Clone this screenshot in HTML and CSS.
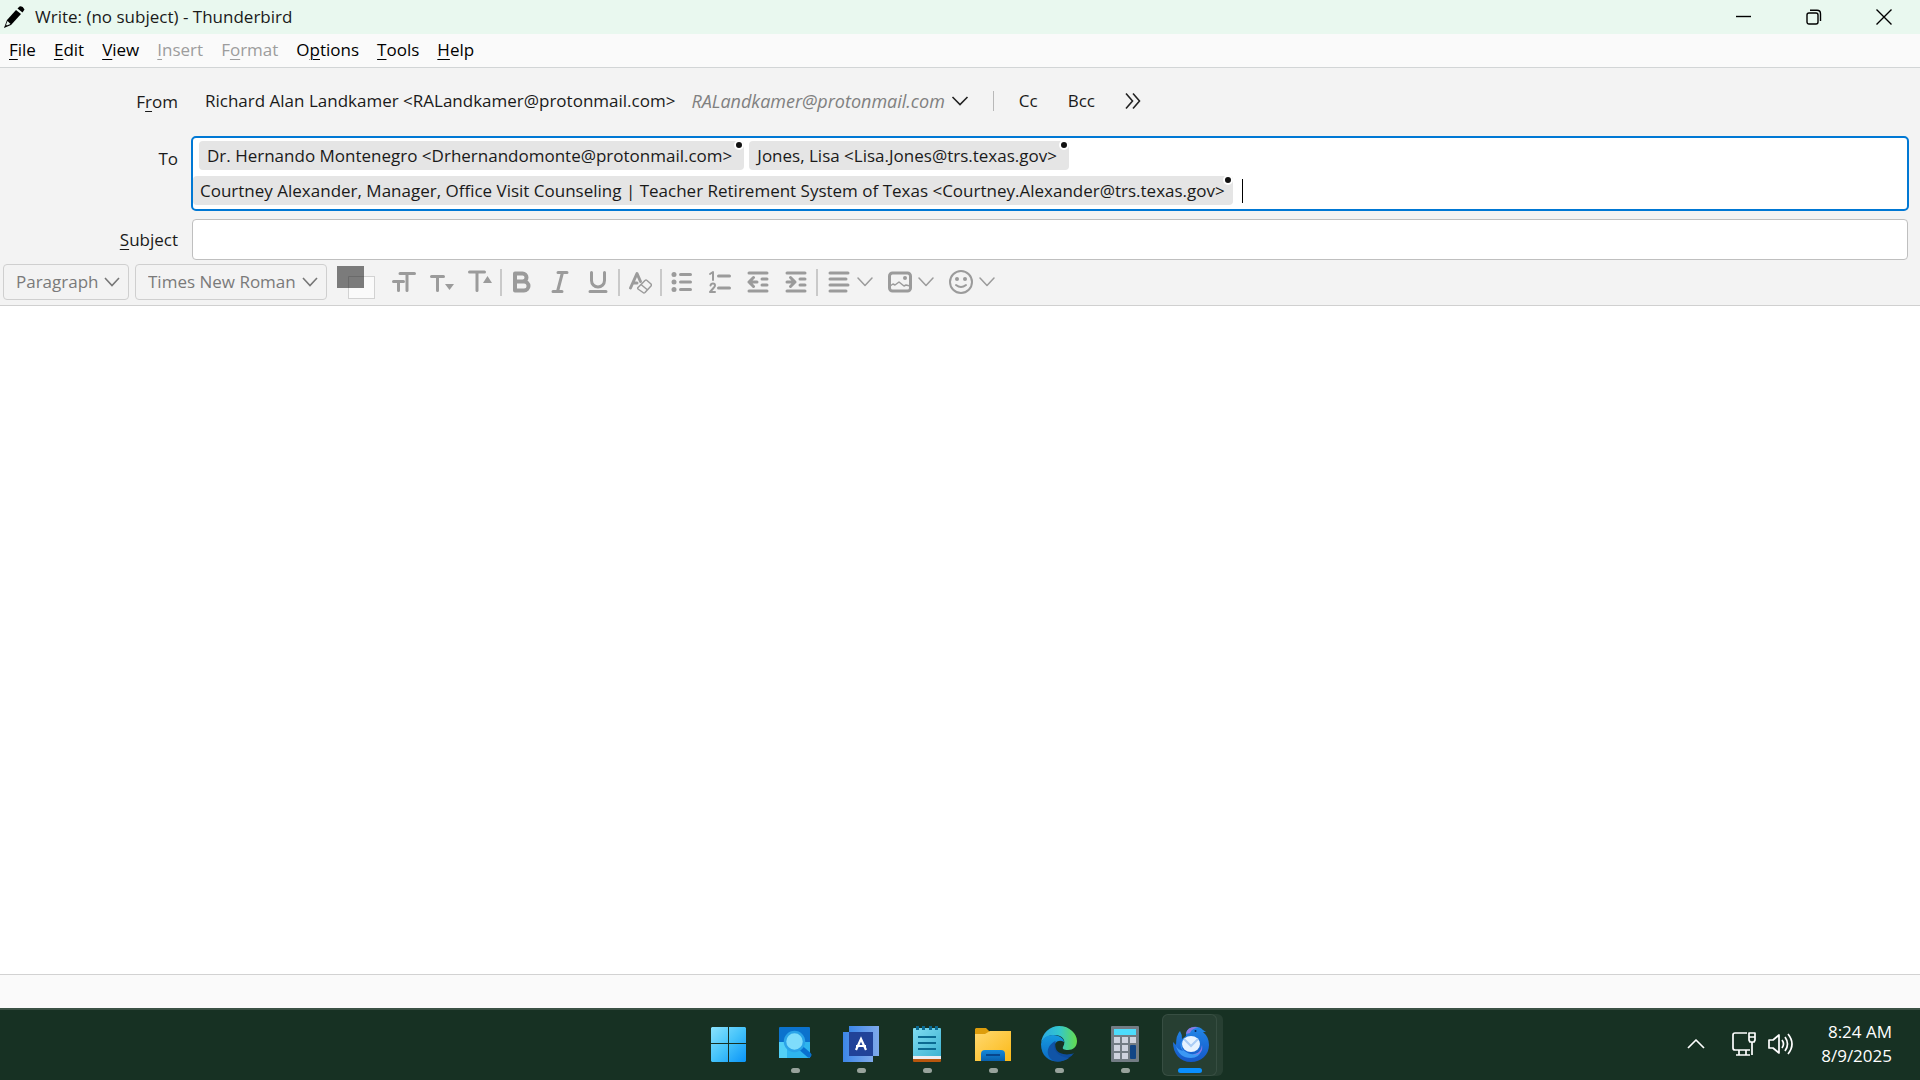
FILE: index.html
```html
<!DOCTYPE html>
<html lang="en">
<head>
<meta charset="utf-8">
<title>Write: (no subject) - Thunderbird</title>
<link rel="stylesheet" href="styles.css">
</head>
<body>
<header class="titlebar">
  <svg class="pencil" width="24" height="28" viewBox="0 0 24 28"><path d="M3 25l3-8L15 7l5 4L10 22z" fill="#000"/><path d="M16.500 5.500l2-2q3-1 5 3L21.500 9.500z" fill="#000"/><path d="M4.500 23l2-5 3 3z" fill="#e9f8ef"/><path d="M3.500 24.500l1.500-3 1 1z"/></svg>
  <h1>Write: (no subject) - Thunderbird</h1>
  <button class="win" aria-label="Minimize"><svg width="16" height="16" viewBox="0 0 16 16"><path d="M0 7.500h15"/></svg></button>
  <button class="win" aria-label="Restore"><svg width="16" height="16" viewBox="0 0 16 16"><rect x="1" y="4" width="11" height="11" rx="2"/><path d="M4 1.200h7q3.500 0 3.500 3.500V12"/></svg></button>
  <button class="win" aria-label="Close"><svg width="16" height="16" viewBox="0 0 16 16"><path d="M.5.5l15 15M15.500.5l-15 15"/></svg></button>
</header>

<nav class="menubar">
  <button><u>F</u>ile</button>
  <button><u>E</u>dit</button>
  <button><u>V</u>iew</button>
  <button disabled><u>I</u>nsert</button>
  <button disabled>F<u>o</u>rmat</button>
  <button>O<u>p</u>tions</button>
  <button><u>T</u>ools</button>
  <button><u>H</u>elp</button>
</nav>

<main class="compose">
  <section class="headers">
    <label class="name name-from" for="from">F<u>r</u>om</label>
    <div class="from-row">
      <button class="identity" id="from"><span>Richard Alan Landkamer &lt;RALandkamer@protonmail.com&gt;</span><i>RALandkamer@protonmail.com</i><svg class="chev" width="18" height="10" viewBox="0 0 18 10"><path d="M1.500 1l7.500 7.500L16.500 1"/></svg></button>
      <span class="divider"></span>
      <button class="extra">Cc</button>
      <button class="extra">Bcc</button>
      <button class="extra" aria-label="Other fields"><svg class="chev" width="16" height="18" viewBox="0 0 16 18"><path d="M1 1.500L7.500 9 1 16.500M8 1.500L14.500 9 8 16.500"/></svg></button>
    </div>

    <label class="name name-to" for="to">To</label>
    <div class="recipients">
      <div class="line inset">
        <span class="pill">Dr. Hernando Montenegro &lt;Drhernandomonte@protonmail.com&gt;<b class="dot"></b></span>
        <span class="pill">Jones, Lisa &lt;Lisa.Jones@trs.texas.gov&gt;<b class="dot"></b></span>
      </div>
      <div class="line">
        <span class="pill">Courtney Alexander, Manager, Office Visit Counseling | Teacher Retirement System of Texas &lt;Courtney.Alexander@trs.texas.gov&gt;<b class="dot"></b></span>
        <span class="caret"></span>
        <input class="to-input" id="to" type="text">
      </div>
    </div>

    <label class="name" for="subject"><u>S</u>ubject</label>
    <input class="subject" id="subject" type="text">
  </section>

  <div class="toolbar">
    <span class="combo combo-style"><select disabled aria-label="Paragraph format"><option>Paragraph</option></select><svg width="16" height="10" viewBox="0 0 16 10"><path d="M1 1l7 7.500L15 1"/></svg></span>
    <span class="combo combo-font"><select disabled aria-label="Font"><option>Times New Roman</option></select><svg width="16" height="10" viewBox="0 0 16 10"><path d="M1 1l7 7.500L15 1"/></svg></span>
    <button class="swatch" disabled aria-label="Text colour"><svg width="40" height="34" viewBox="0 0 40 34"><rect x="11.500" y="10.500" width="26" height="22" fill="#fafafa" stroke="#d2d2d2"/><rect width="27" height="22" fill="#7b7b7b"/><path d="M11.500 22V10.500H27" fill="none" stroke="#6a6a6a"/></svg></button>
    <button class="tool" disabled aria-label="Font size"><svg width="24" height="24" viewBox="0 0 24 24"><path d="M8 3.500h14.500M15 3.500v17M1.500 11.500h10M6.500 11.500v9" class="thick"/></svg></button>
    <button class="tool" disabled aria-label="Smaller"><svg width="24" height="24" viewBox="0 0 24 24"><path d="M1.500 6.500h12M7.500 6.500v14" class="thick"/><path d="M15 14h9l-4.500 6z" class="solid"/></svg></button>
    <button class="tool" disabled aria-label="Larger"><svg width="24" height="24" viewBox="0 0 24 24"><path d="M1.500 2h15M9 2v18.500" class="thick"/><path d="M15 13h9l-4.500-7z" class="solid"/></svg></button>
    <span class="sep"></span>
    <button class="tool" disabled aria-label="Bold"><svg width="24" height="24" viewBox="0 0 24 24"><path d="M5 3.500h7.500a4 4 0 0 1 0 8H5zM5 11.500h9a4.300 4.300 0 0 1 0 9H5z" class="heavy"/></svg></button>
    <button class="tool" disabled aria-label="Italic"><svg width="24" height="24" viewBox="0 0 24 24"><path d="M10 2.500h9M5 21.500h9M14.500 2.500l-5 19" class="thick"/></svg></button>
    <button class="tool" disabled aria-label="Underline"><svg width="24" height="24" viewBox="0 0 24 24"><path d="M5.500 2.500v8a6.500 6.500 0 0 0 13 0v-8M4 21.500h16" class="thick"/></svg></button>
    <span class="sep"></span>
    <button class="tool" disabled aria-label="Remove formatting"><svg width="24" height="24" viewBox="0 0 24 24"><path d="M2.500 18L9 3.500l3.500 8M5 13h4" class="thick"/><path d="M10 17.500l7-7q1-.8 2 0l4 3.500q.8 1 0 2l-6 6.500q-1 .8-2 0L10 19q-.6-.8 0-1.500zM13 14.500l6 5" class="thin"/></svg></button>
    <span class="sep"></span>
    <button class="tool" disabled aria-label="Bulleted list"><svg width="24" height="24" viewBox="0 0 24 24"><circle cx="4" cy="4.500" r="2.500" class="solid"/><circle cx="4" cy="12" r="2.500" class="solid"/><circle cx="4" cy="19.500" r="2.500" class="solid"/><path d="M10.500 4.500h10M10.500 12h10M10.500 19.500h10" class="thick"/></svg></button>
    <button class="tool" disabled aria-label="Numbered list"><svg width="24" height="24" viewBox="0 0 24 24"><path d="M2 4l3-2v8M2.500 15.500q.5-2 2.500-2 2 0 2 2 0 1-1.500 2.500L2 22h5" class="mid"/><path d="M10.500 6h11M10.500 18h11" class="thick"/></svg></button>
    <button class="tool" disabled aria-label="Outdent"><svg width="24" height="24" viewBox="0 0 24 24"><path d="M3 3h18M3 21h18M16 9h5M16 15h5M3 12h8M7.500 7.500L3 12l4.500 4.500" class="thick"/></svg></button>
    <button class="tool" disabled aria-label="Indent"><svg width="24" height="24" viewBox="0 0 24 24"><path d="M3 3h18M3 21h18M16 9h5M16 15h5M3 12h8M6.500 7.500L11 12l-4.500 4.500" class="thick"/></svg></button>
    <span class="sep"></span>
    <button class="tool wide" disabled aria-label="Align"><svg width="24" height="24" viewBox="0 0 24 24"><path d="M3 3h18M3 9h16M3 15h18M3 21h16" class="thick"/></svg><svg width="16" height="10" viewBox="0 0 16 10"><path d="M1 1l7 7.500L15 1" class="thin"/></svg></button>
    <button class="tool wide" disabled aria-label="Insert image"><svg width="24" height="24" viewBox="0 0 24 24"><rect x="1.500" y="3" width="21" height="18" rx="3" class="thick"/><circle cx="17" cy="8" r="2" class="solid"/><path d="M2 16l3-2 2 1 4-3 5 4 2-1 4 1" class="thin"/></svg><svg width="16" height="10" viewBox="0 0 16 10"><path d="M1 1l7 7.500L15 1" class="thin"/></svg></button>
    <button class="tool wide" disabled aria-label="Insert emoji"><svg width="24" height="24" viewBox="0 0 24 24"><circle cx="12" cy="12" r="11" class="mid"/><circle cx="8" cy="9" r="2" class="solid"/><circle cx="16" cy="9" r="2" class="solid"/><path d="M7 15q5 4 10 0" class="mid"/></svg><svg width="16" height="10" viewBox="0 0 16 10"><path d="M1 1l7 7.500L15 1" class="thin"/></svg></button>
  </div>

  <textarea class="editor" aria-label="Message body"></textarea>
  <div class="statusbar"></div>
</main>

<footer class="taskbar">
  <span></span>
  <div class="apps">
    <button class="app" aria-label="Start"><svg width="36" height="36" viewBox="0 0 36 36"><defs><linearGradient id="win" x2="1" y2="1" gradientUnits="objectBoundingBox"><stop stop-color="#8be3fd"/><stop offset=".5" stop-color="#45c3fa"/><stop offset="1" stop-color="#0a94f8"/></linearGradient></defs><path d="M1 1h16v16H0V2zM18 1h16l1 1v15H18zM0 18h17v18H1l-1-1zM18 18h17v17l-1 1H18z" fill="url(#win)"/></svg></button>
    <button class="app open" aria-label="Search"><svg width="36" height="36" viewBox="0 0 36 36"><rect x="2" y="1" width="31" height="31" rx="1" fill="#0b72cd"/><path d="M2 16h31v16H2z" fill="#2eb5ee"/><path d="M2 16h8v16H2z" fill="#52d0f6"/><path d="M24 22l8 7" stroke="#0870cf" stroke-width="5" stroke-linecap="round"/><circle cx="17.500" cy="15.500" r="9.500" fill="#7fdcfb" stroke="#2aa3e8" stroke-width="2.500"/></svg></button>
    <button class="app open" aria-label="Scanner"><svg width="36" height="36" viewBox="0 0 36 36"><defs><linearGradient id="bk"><stop stop-color="#3c86e8"/><stop offset="1" stop-color="#7fa9ea"/></linearGradient></defs><path d="M6 0h30v30H6z" fill="url(#bk)"/><path d="M0 6h30v30H0z" fill="url(#bk)"/><path d="M6 6h24v24H6z" fill="#214298"/><path d="M13 24l5-11 5 11M13 20h10" fill="none" stroke="#fff" stroke-width="2.200"/></svg></button>
    <button class="app open" aria-label="Notepad"><svg width="36" height="36" viewBox="0 0 36 36"><defs><linearGradient id="np" x2="1" y2="1"><stop stop-color="#80dcf1"/><stop offset="1" stop-color="#3eb3d2"/></linearGradient></defs><rect x="4" y="26" width="28" height="10" rx="1" fill="#b9560d"/><path d="M4 28h28v5H4z" fill="#ececf2"/><path d="M4 3q0-1 1-1h26q1 0 1 1v27H4z" fill="url(#np)"/><path d="M9 11h18M9 17h18M9 23h18" stroke="#0b6a92" stroke-width="2"/><path d="M8.500 0v4M14.500 0v4M21.500 0v4M27.500 0v4" stroke="#0b6a92" stroke-width="3"/></svg></button>
    <button class="app open" aria-label="File Explorer"><svg width="36" height="36" viewBox="0 0 36 36"><defs><linearGradient id="fo" x2="1" y2="1"><stop stop-color="#ffd970"/><stop offset="1" stop-color="#fbb917"/></linearGradient><linearGradient id="fb" x2="0" y2="1"><stop stop-color="#1489db"/><stop offset="1" stop-color="#0960ac"/></linearGradient></defs><path d="M0 3l1-1h10l4 4v6H0z" fill="#dd9d0c"/><path d="M0 8h10l5-3h21v30H0z" fill="url(#fo)"/><path d="M6 35v-7q0-4 4-4h16q4 0 4 4v7z" fill="url(#fb)"/><path d="M11 29h14" stroke="#07468c" stroke-width="2"/></svg></button>
    <button class="app open" aria-label="Edge"><svg width="36" height="36" viewBox="0 0 36 36"><defs><linearGradient id="e1"><stop stop-color="#2aa8e4"/><stop offset=".5" stop-color="#33c6ce"/><stop offset="1" stop-color="#65dc4c"/></linearGradient><linearGradient id="e2" x2="0" y2="1"><stop stop-color="#169adf"/><stop offset="1" stop-color="#0b68c4"/></linearGradient></defs><path d="M0 17C1 7 9 0 18 0c11 0 18 8 18 15 0 6-4 9-9 9-4 0-6-1-5-3 4-7-1-12-8-12C7 9 2 12 0 17z" fill="url(#e1)"/><path d="M0 18C1 12 6 9 12 9c7 0 11 4 11 7-6-4-12 2-9 9 2 5 8 8 14 6-8 8-28 6-28-13z" fill="url(#e2)"/><path d="M15 15c-6 4-5 14 3 17 5 2 11 1 15-5-7 3-16 1-18-4-1-3-1-6 0-8z" fill="#0d4c9c"/><path d="M13 35c-8-4-9-14 1-20-3 8 2 16 14 17-4 3-9 4-15 3z" fill="#1054a6"/></svg></button>
    <button class="app open" aria-label="Calculator"><svg width="36" height="36" viewBox="0 0 36 36"><rect x="4" width="28" height="36" rx="1" fill="#737c84"/><path d="M7 3h22v6H7z" fill="#4ddcfb"/><path d="M7 11h6v6H7zM15 11h6v6h-6zM23 11h6v6h-6zM7 19h6v6H7zM15 19h6v6h-6zM7 27h6v6H7zM15 27h6v6h-6z" fill="#cfd3de"/><rect x="23" y="19" width="6" height="14" rx="1" fill="#114585"/></svg></button>
    <button class="app open active" aria-label="Thunderbird"><svg width="36" height="36" viewBox="0 0 36 36"><defs><linearGradient id="tb" x2="0" y2="1"><stop stop-color="#2287e8"/><stop offset="1" stop-color="#1557c8"/></linearGradient></defs><path d="M0 16l3 3Q3 9 7 5q2 3 2 8l4-3q-1-7 7-9 6-1 10 3l3 2h-3q6 5 6 13c0 10-8 17-18 17C7 36 0 28 0 16z" fill="url(#tb)"/><path d="M13 8q1-7 9-7l3 1q-6 0-8 5z" fill="#8f79df"/><path d="M3 20q3 12 15 12 8 0 10-7-8 7-18-1-3-5 0-10-5 5 0 11-5-1-7-5z" fill="#3b98f4"/><path d="M19 29q9-1 10-10 2 10-10 10z" fill="#8b79e4"/><ellipse cx="18" cy="18" rx="9" ry="8" fill="#e8f3ff"/><path d="M11 13l7 7 7-7" fill="none" stroke="#abccf5" stroke-width="2"/><circle cx="22.500" cy="5" r="1" fill="#0a2358"/></svg></button>
  </div>
  <div class="tray">
    <button aria-label="Hidden icons"><svg width="18" height="12" viewBox="0 0 18 12"><path d="M1 10l8-8 8 8"/></svg></button>
    <button aria-label="Network and volume" class="quick"><svg width="26" height="26" viewBox="0 0 26 26"><path d="M16 2H4Q2 2 2 4v13q0 2 2 2h15M8 19v5M15 19v5M5 24h14M18 2h6v7l-1 2h-4l-1-2zM18 6h6M21 11v13"/></svg><svg width="26" height="26" viewBox="0 0 26 26"><path d="M2 9h4l6-5v18l-6-5H2zM15 9q3 4 0 8M18 6q5 7 0 14M21 3q8 10 0 20"/></svg></button>
    <time>8:24 AM<br>8/9/2025</time>
  </div>
</footer>
</body>
</html>
```
FILE: styles.css
```css
* { box-sizing: border-box; }

body {
  margin: 0;
  min-height: 100vh;
  display: flex;
  flex-direction: column;
  font: 17px/24px "Open Sans", "Noto Sans", sans-serif;
  color: #1a1a1a;
  background: #fff;
}

button, input, select, textarea {
  font: inherit;
  color: inherit;
  margin: 0;
  padding: 0;
  border: 0;
  background: none;
  outline: 0;
}

svg { display: block; flex: none; }

u { text-underline-offset: 3px; text-decoration-thickness: 1px; }

/* Title bar */
.titlebar {
  display: flex;
  align-items: center;
  height: 34px;
  padding: 0 1px;
  background: #e9f8ef;
}
.titlebar h1 {
  flex: 1;
  margin: 0 0 0 10px;
  font-size: 17px;
  font-weight: 400;
}
.win {
  display: grid;
  place-items: center;
  width: 70px;
  height: 34px;
}
.win svg { fill: none; stroke: #000; stroke-width: 1.4; }

/* Menu bar */
.menubar {
  display: flex;
  gap: 18px;
  height: 34px;
  padding: 0 9px 2px;
  color: #000;
  background: #fafafa;
  border-bottom: 1px solid #d2d5d6;
}
.menubar button:disabled { color: #9d9d9d; }

/* Address area */
.compose {
  flex: 1;
  display: flex;
  flex-direction: column;
}
.headers {
  display: grid;
  grid-template-columns: 178px 1fr;
  column-gap: 13px;
  align-items: center;
  padding: 12px 11px 4px 0;
  background: #f3f3f3;
}
.name { justify-self: end; }
.name-from { margin-bottom: 12px; }
.name-to { align-self: start; padding-top: 11px; }
.from-row {
  display: flex;
  align-items: center;
  height: 42px;
  margin-bottom: 14px;
}
.identity {
  display: flex;
  align-items: center;
  padding-left: 14px;
}
.identity i { margin: 0 6px 0 16px; font-size: 18px; color: #808080; }
.chev { fill: none; stroke: #222; stroke-width: 1.6; }
.divider {
  width: 1px;
  height: 20px;
  margin: 0 10px 0 24px;
  background: #b8b8b8;
}
.extra { padding: 0 15px; }

.recipients {
  display: flex;
  flex-direction: column;
  gap: 6px;
  padding: 3px 0 4px;
  margin-bottom: 8px;
  background: #fff;
  border: 2px solid #0078d4;
  border-radius: 5px;
}
.line { display: flex; align-items: center; gap: 5px; }
.inset { padding-left: 6px; }
.pill {
  position: relative;
  padding: 3px 12px 2px 8px;
  white-space: nowrap;
  background: #e5e5e5;
  border-radius: 4px;
}
.line:not(.inset) .pill { padding: 3px 8px 2px 7px; }
.dot {
  position: absolute;
  top: -1px;
  right: 0;
  width: 10px;
  height: 10px;
  background: #111;
  border: 2px solid #fff;
  border-radius: 5px;
}
.caret { width: 1px; height: 24px; margin-left: 4px; background: #000; }
.to-input { flex: 1; min-width: 0; }
.subject {
  height: 41px;
  margin: 0 1px;
  padding: 0 8px;
  background: #fff;
  border: 1px solid #bfbfbf;
  border-radius: 4px;
}

/* Formatting toolbar */
.toolbar {
  display: flex;
  align-items: center;
  height: 42px;
  padding: 0 3px 5px;
  background: #f3f3f3;
  border-bottom: 1px solid #d0d0d0;
}
.combo {
  display: grid;
  align-items: center;
  height: 36px;
  margin-right: 6px;
  color: #7a7a7a;
  border: 1px solid #cfcfcf;
  border-radius: 4px;
}
.combo-style { width: 126px; }
.combo-font { width: 192px; }
.combo select {
  grid-area: 1 / 1;
  width: 100%;
  height: 34px;
  padding-left: 12px;
  appearance: none;
  opacity: 1;
}
.combo svg {
  grid-area: 1 / 1;
  justify-self: end;
  margin-right: 8px;
  fill: none;
  stroke: #777;
  stroke-width: 1.6;
}
.swatch { margin: 2px 8px 0 4px; }
.tool {
  display: flex;
  justify-content: center;
  align-items: center;
  width: 38px;
  height: 36px;
}
.tool svg { fill: none; stroke: #9b9b9b; stroke-linecap: round; stroke-linejoin: round; }
.wide { width: 61px; gap: 6px; }
.thick { stroke-width: 3; }
.heavy { stroke-width: 4; }
.mid { stroke-width: 2; }
.thin { stroke-width: 1.5; }
.solid { fill: #9b9b9b; stroke: none; }
.sep {
  width: 2px;
  height: 27px;
  margin: 0 1px;
  background: #c9c9c9;
}

.editor { flex: 1; width: 100%; padding: 10px; resize: none; background: #fff; }
.statusbar { height: 34px; background: #fafafa; border-top: 1px solid #d2d2d2; }

/* Taskbar */
.taskbar {
  display: grid;
  grid-template-columns: 1fr auto 1fr;
  height: 72px;
  color: #fff;
  background: #173123;
  border-top: 2px solid #3b5245;
}
.apps { display: flex; }
.app {
  position: relative;
  display: flex;
  justify-content: center;
  align-items: flex-start;
  width: 66px;
  height: 70px;
  padding-top: 16px;
}
.open::after {
  content: "";
  position: absolute;
  left: 29px;
  bottom: 7px;
  width: 9px;
  height: 5px;
  background: #98a39c;
  border-radius: 3px;
}
.active::before {
  content: "";
  position: absolute;
  left: 4px;
  top: 4px;
  width: 53px;
  height: 60px;
  background: #ffffff12;
  border: 1px solid #ffffff14;
  border-radius: 6px;
  box-shadow: 6px 0 0 #ffffff12;
}
.active svg { position: relative; }
.active::after { left: 20px; width: 24px; background: #0a8fff; }
.tray {
  display: flex;
  justify-content: flex-end;
  align-items: center;
  padding: 0 28px 2px 0;
}
.tray svg { fill: none; stroke: #fff; stroke-width: 1.7; stroke-linejoin: round; }
.quick { display: flex; gap: 10px; margin: 0 28px 0 26px; }
.tray time { text-align: right; }
```
